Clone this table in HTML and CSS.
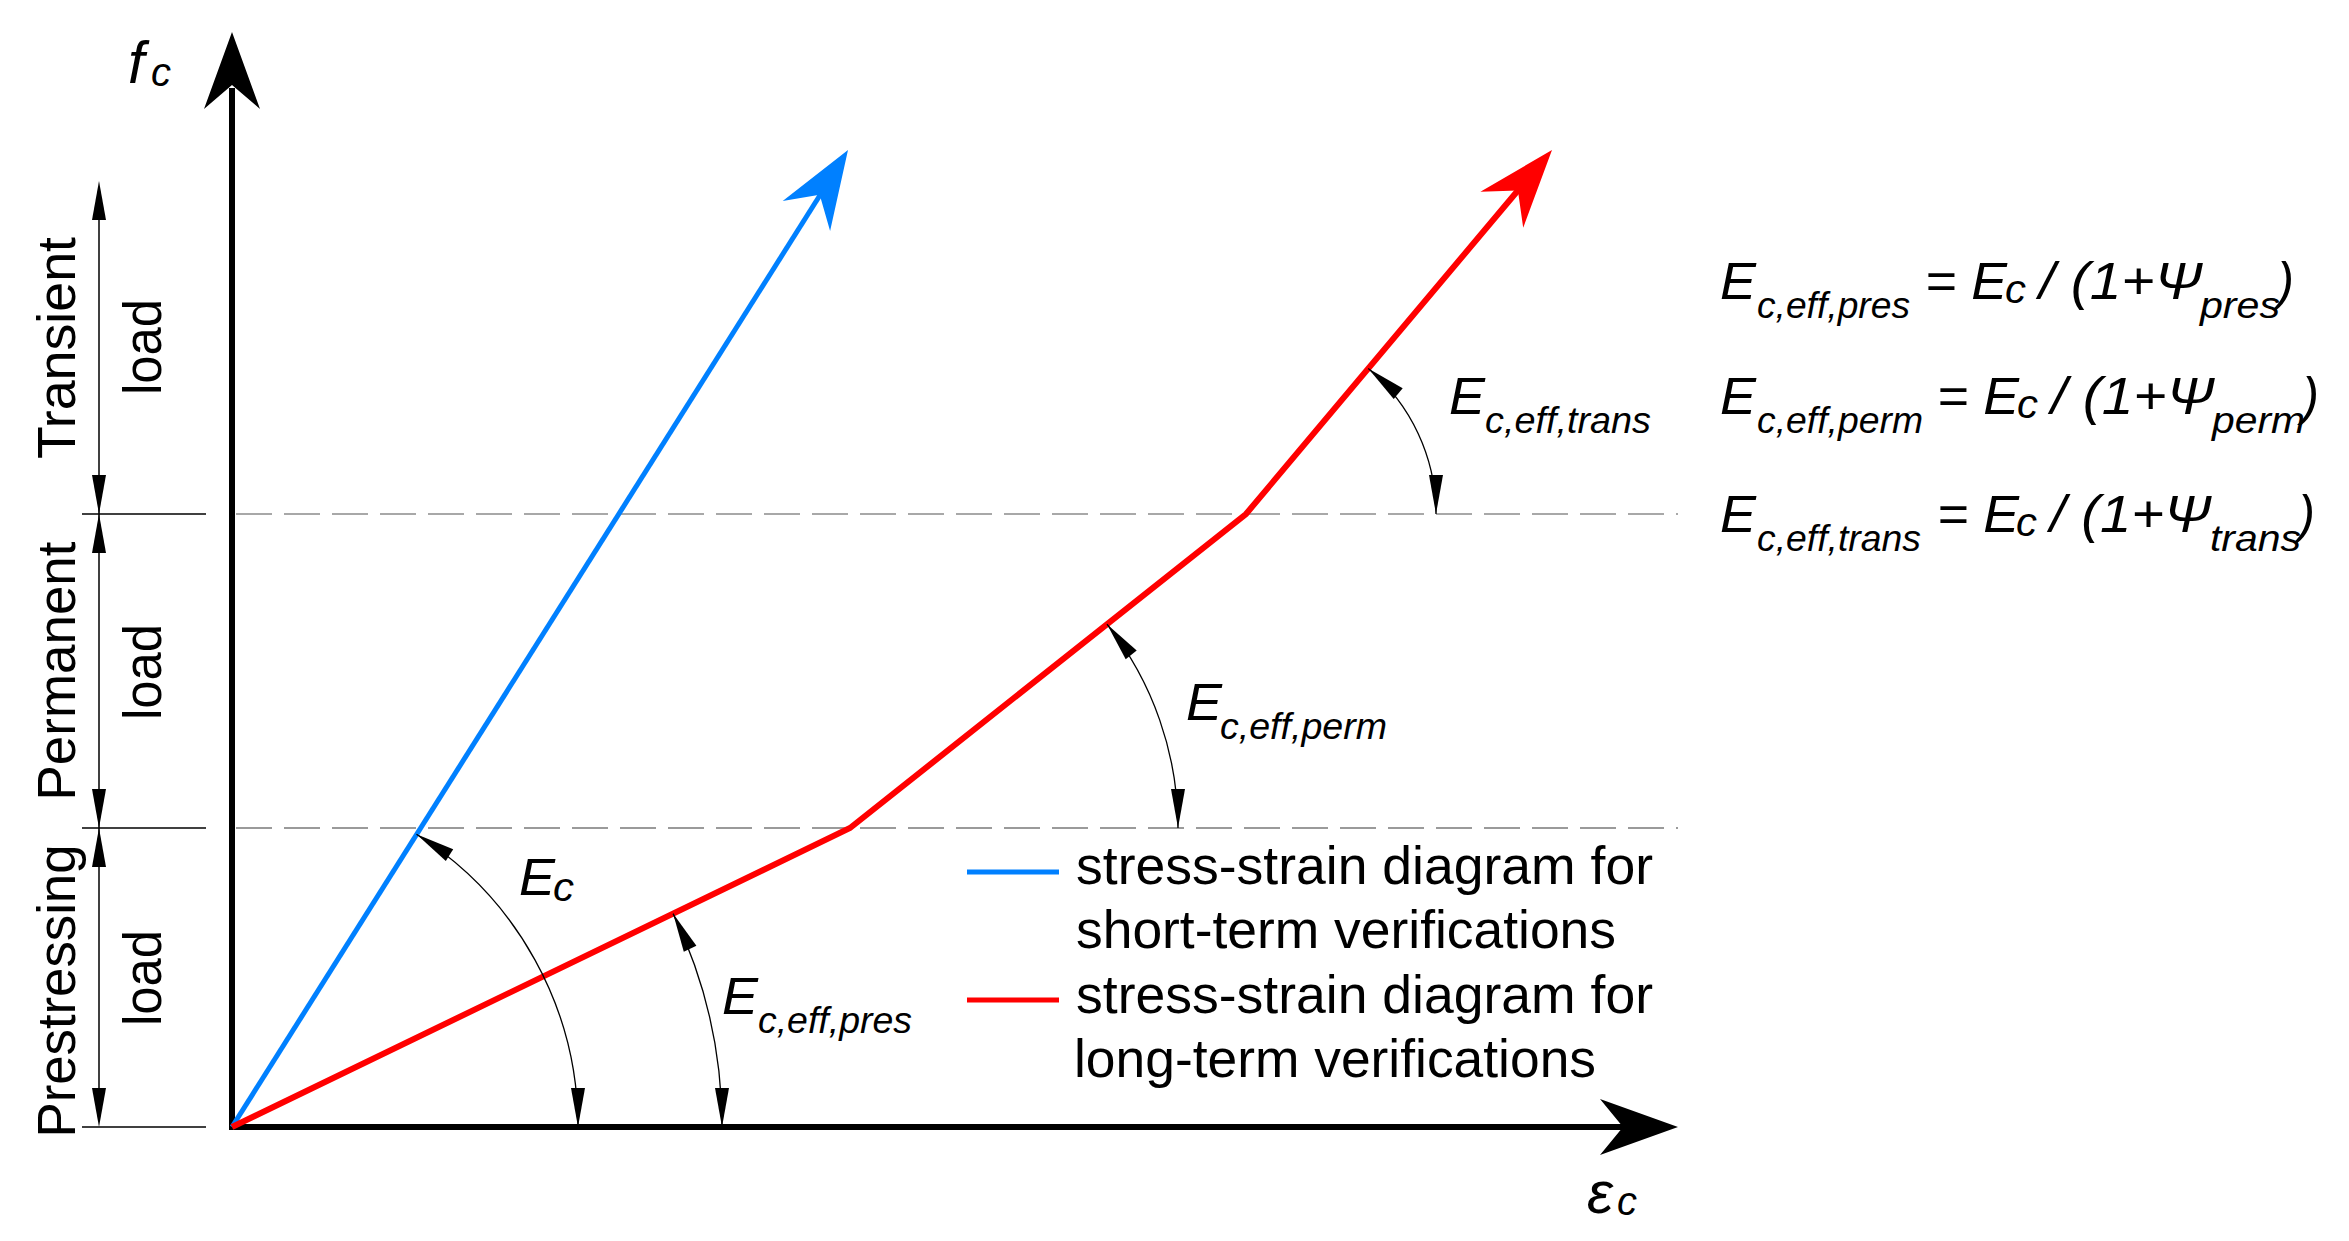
FILE: index.html
```html
<!DOCTYPE html>
<html lang="en">
<head>
<meta charset="utf-8">
<title>Stress-strain diagram</title>
<link rel="stylesheet" href="styles.css">
</head>
<body>
<main class="page">
<svg class="diagram" width="2349" height="1241" viewBox="0 0 2349 1241" xmlns="http://www.w3.org/2000/svg">
  <!-- dashed level lines -->
  <line class="dash dash-top" x1="236" y1="514" x2="1678" y2="514"/>
  <line class="dash dash-bot" x1="236" y1="828" x2="1678" y2="828"/>

  <!-- left dimension chain -->
  <line class="thin" x1="99" y1="190" x2="99" y2="1120"/>
  <line class="thin" x1="82" y1="514" x2="206" y2="514"/>
  <line class="thin" x1="82" y1="828" x2="206" y2="828"/>
  <line class="thin" x1="82" y1="1127" x2="206" y2="1127"/>
  <polygon class="fill-black" points="99,181 92,220 106,220"/>
  <polygon class="fill-black" points="99,514 92,475 106,475"/>
  <polygon class="fill-black" points="99,514 92,553 106,553"/>
  <polygon class="fill-black" points="99,828 92,789 106,789"/>
  <polygon class="fill-black" points="99,828 92,867 106,867"/>
  <polygon class="fill-black" points="99,1127 92,1088 106,1088"/>

  <text class="side" transform="translate(75,348) rotate(-90)" textLength="222" lengthAdjust="spacingAndGlyphs">Transient</text>
  <text class="side" transform="translate(161,347) rotate(-90)" textLength="96" lengthAdjust="spacingAndGlyphs">load</text>
  <text class="side" transform="translate(75,671) rotate(-90)" textLength="259" lengthAdjust="spacingAndGlyphs">Permanent</text>
  <text class="side" transform="translate(161,672) rotate(-90)" textLength="96" lengthAdjust="spacingAndGlyphs">load</text>
  <text class="side" transform="translate(75,991) rotate(-90)" textLength="293" lengthAdjust="spacingAndGlyphs">Prestressing</text>
  <text class="side" transform="translate(161,978) rotate(-90)" textLength="96" lengthAdjust="spacingAndGlyphs">load</text>

  <!-- axes -->
  <line class="axis" x1="232" y1="1130" x2="232" y2="88"/>
  <polygon class="fill-black" points="232,32 204,109 232,85 260,109"/>
  <line class="axis" x1="229" y1="1127" x2="1626" y2="1127"/>
  <polygon class="fill-black" points="1678,1127 1600,1099 1623,1127 1600,1155"/>

  <text class="math axis-label" x="128" y="83">f</text>
  <text class="math sub-c" x="151" y="86">c</text>
  <text class="math axis-label" x="1587" y="1213">ε</text>
  <text class="math sub-c" x="1617" y="1215">c</text>

  <!-- blue short-term line -->
  <line class="blue-line" x1="232" y1="1127" x2="822" y2="192"/>
  <polygon class="fill-blue" points="848,150 782.7,201.1 819.7,194.8 830.1,230.9"/>

  <!-- red long-term line -->
  <polyline class="red-line" points="232,1127 850,828 1246,514 1520,188"/>
  <polygon class="fill-red" points="1552,150 1480.4,191.7 1517.9,190.6 1523.2,227.7"/>

  <!-- angle arcs -->
  <path class="arc" d="M 416.5 834.3 A 346 346 0 0 1 578 1127"/>
  <polygon class="fill-black" points="416.5,834.3 453.2,849.2 445.8,861.0"/>
  <polygon class="fill-black" points="578,1127 571,1088 585,1088"/>

  <path class="arc" d="M 673.1 913.6 A 490 490 0 0 1 722 1127"/>
  <polygon class="fill-black" points="673.1,913.6 696.4,945.7 683.8,951.8"/>
  <polygon class="fill-black" points="722,1127 715,1088 729,1088"/>

  <path class="arc" d="M 1107 624.2 A 328 328 0 0 1 1178 828"/>
  <polygon class="fill-black" points="1107,624.2 1136.7,650.4 1125.7,659.2"/>
  <polygon class="fill-black" points="1178,828 1171,789 1185,789"/>

  <path class="arc" d="M 1368.3 368.6 A 190 190 0 0 1 1436 514"/>
  <polygon class="fill-black" points="1368.3,368.6 1402.7,388.3 1393.7,399.1"/>
  <polygon class="fill-black" points="1436,514 1429,475 1443,475"/>

  <!-- angle labels -->
  <text class="math" x="519" y="895" textLength="36" lengthAdjust="spacingAndGlyphs">E</text>
  <text class="math sub-c" x="553" y="901" textLength="21" lengthAdjust="spacingAndGlyphs">c</text>

  <text class="math" x="722" y="1014" textLength="36" lengthAdjust="spacingAndGlyphs">E</text>
  <text class="math sub" x="758" y="1033" textLength="154" lengthAdjust="spacingAndGlyphs">c,eff,pres</text>

  <text class="math" x="1186" y="720" textLength="36" lengthAdjust="spacingAndGlyphs">E</text>
  <text class="math sub" x="1220" y="739" textLength="167" lengthAdjust="spacingAndGlyphs">c,eff,perm</text>

  <text class="math" x="1449" y="414" textLength="36" lengthAdjust="spacingAndGlyphs">E</text>
  <text class="math sub" x="1485" y="433" textLength="166" lengthAdjust="spacingAndGlyphs">c,eff,trans</text>

  <!-- formulas -->
  <g class="formula">
    <text class="math" x="1720" y="299" textLength="36" lengthAdjust="spacingAndGlyphs">E</text>
    <text class="math sub" x="1757" y="318" textLength="153" lengthAdjust="spacingAndGlyphs">c,eff,pres</text>
    <text class="math" x="1925" y="299" textLength="82" lengthAdjust="spacingAndGlyphs">= E</text>
    <text class="math sub-c" x="2005" y="303" textLength="21" lengthAdjust="spacingAndGlyphs">c</text>
    <text class="math" x="2039" y="299" textLength="163" lengthAdjust="spacingAndGlyphs">/ (1+Ψ</text>
    <text class="math sub" x="2200" y="318" textLength="80" lengthAdjust="spacingAndGlyphs">pres</text>
    <text class="math" x="2277" y="299" textLength="17" lengthAdjust="spacingAndGlyphs">)</text>
  </g>
  <g class="formula">
    <text class="math" x="1720" y="414" textLength="36" lengthAdjust="spacingAndGlyphs">E</text>
    <text class="math sub" x="1757" y="433" textLength="166" lengthAdjust="spacingAndGlyphs">c,eff,perm</text>
    <text class="math" x="1937" y="414" textLength="82" lengthAdjust="spacingAndGlyphs">= E</text>
    <text class="math sub-c" x="2017" y="418" textLength="21" lengthAdjust="spacingAndGlyphs">c</text>
    <text class="math" x="2051" y="414" textLength="163" lengthAdjust="spacingAndGlyphs">/ (1+Ψ</text>
    <text class="math sub" x="2212" y="433" textLength="93" lengthAdjust="spacingAndGlyphs">perm</text>
    <text class="math" x="2302" y="414" textLength="17" lengthAdjust="spacingAndGlyphs">)</text>
  </g>
  <g class="formula">
    <text class="math" x="1720" y="532" textLength="36" lengthAdjust="spacingAndGlyphs">E</text>
    <text class="math sub" x="1757" y="551" textLength="164" lengthAdjust="spacingAndGlyphs">c,eff,trans</text>
    <text class="math" x="1937" y="532" textLength="82" lengthAdjust="spacingAndGlyphs">= E</text>
    <text class="math sub-c" x="2016" y="536" textLength="21" lengthAdjust="spacingAndGlyphs">c</text>
    <text class="math" x="2050" y="532" textLength="161" lengthAdjust="spacingAndGlyphs">/ (1+Ψ</text>
    <text class="math sub" x="2210" y="551" textLength="91" lengthAdjust="spacingAndGlyphs">trans</text>
    <text class="math" x="2298" y="532" textLength="17" lengthAdjust="spacingAndGlyphs">)</text>
  </g>

  <!-- legend -->
  <line class="legend-blue" x1="967" y1="872" x2="1059" y2="872"/>
  <line class="legend-red" x1="967" y1="1000" x2="1059" y2="1000"/>
  <text class="legend" x="1076" y="884" textLength="577" lengthAdjust="spacingAndGlyphs">stress-strain diagram for</text>
  <text class="legend" x="1076" y="948" textLength="540" lengthAdjust="spacingAndGlyphs">short-term verifications</text>
  <text class="legend" x="1076" y="1013" textLength="577" lengthAdjust="spacingAndGlyphs">stress-strain diagram for</text>
  <text class="legend" x="1074" y="1077" textLength="522" lengthAdjust="spacingAndGlyphs">long-term verifications</text>
</svg>
</main>
</body>
</html>
```

FILE: styles.css
```css
html, body {
  margin: 0;
  padding: 0;
  background: #ffffff;
}

.page {
  display: block;
  width: 2349px;
  height: 1241px;
  overflow: hidden;
}

.diagram {
  display: block;
  font-family: "Liberation Sans", Arial, sans-serif;
}

.dash {
  stroke-width: 2;
  stroke-dasharray: 36 12;
  fill: none;
}
.dash-top { stroke: #a8a8a8; }
.dash-bot { stroke: #9a9a9a; }

.thin {
  stroke: #000;
  stroke-width: 1.5;
}

.axis {
  stroke: #000;
  stroke-width: 6;
}

.fill-black { fill: #000; }
.fill-blue { fill: #0080ff; }
.fill-red { fill: #ff0000; }

.blue-line {
  stroke: #0080ff;
  stroke-width: 5;
}

.red-line {
  stroke: #ff0000;
  stroke-width: 6;
  fill: none;
  stroke-linejoin: miter;
}

.arc {
  fill: none;
  stroke: #000;
  stroke-width: 1.3;
}

.side {
  font-size: 54px;
  text-anchor: middle;
  fill: #000;
}

.math {
  font-size: 52px;
  font-style: italic;
  fill: #000;
}

.math.axis-label {
  font-size: 59px;
}

.math.sub {
  font-size: 36px;
}

.math.sub-c {
  font-size: 40px;
}

.legend {
  font-size: 53px;
  fill: #000;
}

.legend-blue {
  stroke: #0080ff;
  stroke-width: 5;
}

.legend-red {
  stroke: #ff0000;
  stroke-width: 5;
}
```
